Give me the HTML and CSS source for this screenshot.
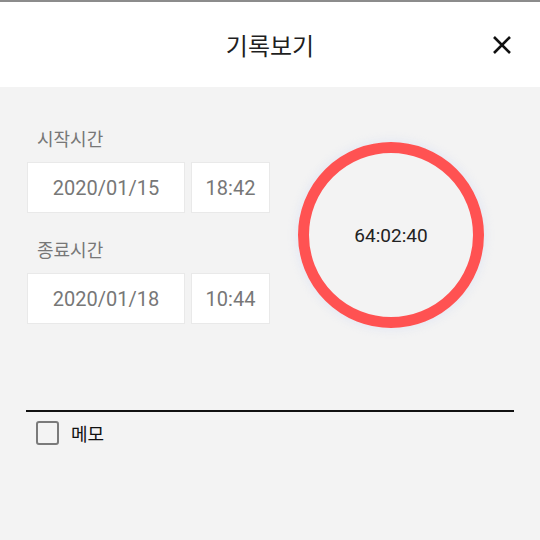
FILE: index.html
```html
<!DOCTYPE html>
<html>
<head>
    <meta charset="UTF-8">
    <title>기록보기</title>
    <!-- Styling for the record view -->
    <link rel="stylesheet" href="styles.css">
</head>
<body>
    <div class="topline"></div>
    <div class="header">
        <span></span>
        <h1 class="title">기록보기</h1>
        <button type="button" class="close" aria-label="close">
            <svg width="20" height="20" viewBox="0 0 20 20">
                <path d="M2 2 L18 18 M18 2 L2 18" stroke="#111" stroke-width="2.6" fill="none"/>
            </svg>
        </button>
    </div>
    <div class="main">
        <div class="top">
            <div class="fields">
                <div class="label">시작시간</div>
                <div class="row">
                    <div class="box date">2020/01/15</div>
                    <div class="box time">18:42</div>
                </div>
                <div class="label">종료시간</div>
                <div class="row">
                    <div class="box date">2020/01/18</div>
                    <div class="box time">10:44</div>
                </div>
            </div>
            <div class="circle">64:02:40</div>
        </div>
        <div class="divider"></div>
        <label class="memo">
            <span class="check"></span>
            <span class="memo-text">메모</span>
        </label>
    </div>
</body>
</html>
```

FILE: styles.css
```css
body {
    margin: 0;
    padding: 0;
    background-color: #f3f3f3;
    font-family: Roboto, "Noto Sans CJK KR", sans-serif;
}
.topline {
    height: 2px;
    background-color: #8c8c8c;
}
.header {
    height: 85px;
    background-color: #FFFFFF;
    display: grid;
    grid-template-columns: 1fr auto 1fr;
    align-items: center;
}
.title {
    margin: 0;
    font-family: "Noto Sans CJK KR", sans-serif;
    font-weight: 400;
    font-size: 24px;
    color: #1f1f1f;
}
.close {
    justify-self: end;
    margin-right: 28px;
    padding: 0;
    border: none;
    background: none;
    width: 20px;
    height: 20px;
    display: flex;
}
.main {
    padding: 39px 26px 0 26px;
}
.top {
    display: flex;
    align-items: flex-start;
}
.fields {
    width: 243px;
    margin-left: 1px;
    overflow: hidden;
}
.label {
    font-family: "Noto Sans CJK KR", sans-serif;
    font-size: 18px;
    line-height: 24px;
    color: #777777;
    padding-left: 10px;
    margin-bottom: 12px;
}
.row {
    display: flex;
    gap: 6px;
}
.row + .label {
    margin-top: 24px;
}
.box {
    box-sizing: border-box;
    height: 51px;
    background-color: #FFFFFF;
    border: 1px solid #e9e9e9;
    display: flex;
    justify-content: center;
    align-items: center;
    font-size: 20px;
    color: #777777;
    flex: none;
}
.date {
    width: 158px;
}
.time {
    width: 79px;
}
.circle {
    box-sizing: border-box;
    width: 186px;
    height: 186px;
    margin-left: 28px;
    margin-top: 16px;
    border: 11px solid #ff5252;
    border-radius: 50%;
    box-shadow: 0 0 8px 2px rgba(210, 220, 245, 0.45);
    display: flex;
    justify-content: center;
    align-items: center;
    font-size: 19px;
    color: #222222;
}
.divider {
    margin-top: 82px;
    height: 2px;
    background-color: #111111;
}
.memo {
    display: flex;
    align-items: center;
    margin-top: 8px;
    padding-left: 10px;
}
.check {
    box-sizing: border-box;
    width: 23px;
    height: 24px;
    border: 2.5px solid #7a7a7a;
    border-radius: 3px;
}
.memo-text {
    margin-left: 12px;
    font-family: "Noto Sans CJK KR", sans-serif;
    font-size: 18px;
    color: #111111;
}
```
